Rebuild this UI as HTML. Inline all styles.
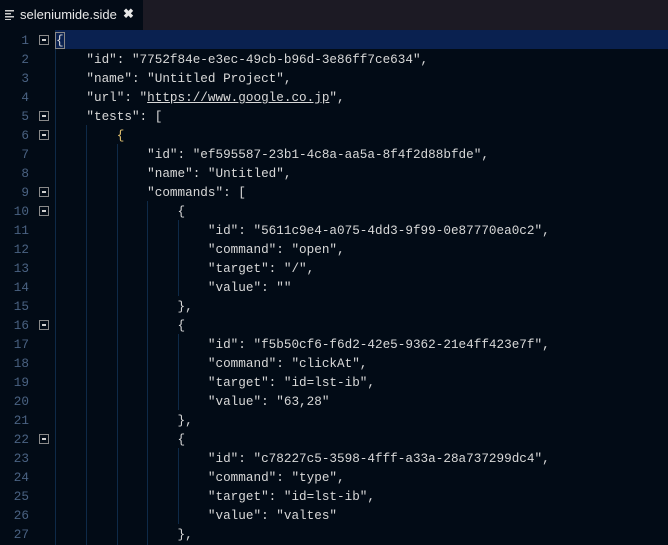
<!DOCTYPE html>
<html><head><meta charset="utf-8"><style>
html,body{margin:0;padding:0;width:668px;height:545px;overflow:hidden;background:#020b16;position:relative;}
.tabbar{position:absolute;left:0;top:0;width:668px;height:30px;background:#1c1a24;}
.tab{position:absolute;left:0;top:0;width:143px;height:30px;background:#030b16;color:#e8e8e8;font:13px "Liberation Sans",sans-serif;}
.tab .t{position:absolute;left:20px;top:7px;}
.tab .x{position:absolute;left:123px;top:6px;font-weight:bold;font-size:13px;}
.hl{position:absolute;left:56px;top:30px;width:612px;height:19px;background:#0a2150;}
.gut{position:absolute;left:55px;top:30px;width:1px;height:515px;background:#0e2a48;}
.g{position:absolute;width:1px;background:#0e2a48;}
.code{position:absolute;left:0;top:31px;font:12.67px/19px "Liberation Mono",monospace;color:#d8d8d8;white-space:pre;}
.ln{position:absolute;left:0;width:29px;text-align:right;color:#4a6282;}
.tx{position:absolute;left:56px;}
.fb{position:absolute;left:39px;width:8px;height:8px;border:1px solid #8a8a8a;}
.fb::after{content:"";position:absolute;left:2px;top:3px;width:4px;height:2px;background:#d0d0d0;}
u{text-decoration:underline;}
.b{color:#e0c070}
</style></head><body>
<div class="tabbar"></div>
<div class="tab"><svg style="position:absolute;left:5px;top:10px" width="10" height="10"><rect x="0" y="0" width="9" height="1.5" fill="#ccc"/><rect x="0" y="3" width="6" height="1.5" fill="#ccc"/><rect x="0" y="6" width="9" height="1.5" fill="#ccc"/><rect x="0" y="9" width="6" height="1" fill="#ccc"/></svg><span class="t">seleniumide.side</span><span class="x">✖</span></div>
<div class="hl"></div>
<div class="gut"></div>
<div class="g" style="left:86px;top:125px;height:420px"></div>
<div class="g" style="left:117px;top:144px;height:401px"></div>
<div class="g" style="left:147px;top:201px;height:344px"></div>
<div class="g" style="left:178px;top:220px;height:76px"></div>
<div class="g" style="left:178px;top:334px;height:76px"></div>
<div class="g" style="left:178px;top:448px;height:76px"></div>
<div class="fb" style="top:35px"></div>
<div class="fb" style="top:111px"></div>
<div class="fb" style="top:130px"></div>
<div class="fb" style="top:187px"></div>
<div class="fb" style="top:206px"></div>
<div class="fb" style="top:320px"></div>
<div class="fb" style="top:434px"></div>
<div class="code">
<div class="ln" style="top:0">1</div><div class="tx" style="top:0"><span style="outline:1px solid #888">{</span></div>
<div class="ln" style="top:19px">2</div><div class="tx" style="top:19px">    "id": "7752f84e-e3ec-49cb-b96d-3e86ff7ce634",</div>
<div class="ln" style="top:38px">3</div><div class="tx" style="top:38px">    "name": "Untitled Project",</div>
<div class="ln" style="top:57px">4</div><div class="tx" style="top:57px">    "url": "<u>https://www.google.co.jp</u>",</div>
<div class="ln" style="top:76px">5</div><div class="tx" style="top:76px">    "tests": [</div>
<div class="ln" style="top:95px">6</div><div class="tx" style="top:95px">        <span class="b">{</span></div>
<div class="ln" style="top:114px">7</div><div class="tx" style="top:114px">            "id": "ef595587-23b1-4c8a-aa5a-8f4f2d88bfde",</div>
<div class="ln" style="top:133px">8</div><div class="tx" style="top:133px">            "name": "Untitled",</div>
<div class="ln" style="top:152px">9</div><div class="tx" style="top:152px">            "commands": [</div>
<div class="ln" style="top:171px">10</div><div class="tx" style="top:171px">                {</div>
<div class="ln" style="top:190px">11</div><div class="tx" style="top:190px">                    "id": "5611c9e4-a075-4dd3-9f99-0e87770ea0c2",</div>
<div class="ln" style="top:209px">12</div><div class="tx" style="top:209px">                    "command": "open",</div>
<div class="ln" style="top:228px">13</div><div class="tx" style="top:228px">                    "target": "/",</div>
<div class="ln" style="top:247px">14</div><div class="tx" style="top:247px">                    "value": ""</div>
<div class="ln" style="top:266px">15</div><div class="tx" style="top:266px">                },</div>
<div class="ln" style="top:285px">16</div><div class="tx" style="top:285px">                {</div>
<div class="ln" style="top:304px">17</div><div class="tx" style="top:304px">                    "id": "f5b50cf6-f6d2-42e5-9362-21e4ff423e7f",</div>
<div class="ln" style="top:323px">18</div><div class="tx" style="top:323px">                    "command": "clickAt",</div>
<div class="ln" style="top:342px">19</div><div class="tx" style="top:342px">                    "target": "id=lst-ib",</div>
<div class="ln" style="top:361px">20</div><div class="tx" style="top:361px">                    "value": "63,28"</div>
<div class="ln" style="top:380px">21</div><div class="tx" style="top:380px">                },</div>
<div class="ln" style="top:399px">22</div><div class="tx" style="top:399px">                {</div>
<div class="ln" style="top:418px">23</div><div class="tx" style="top:418px">                    "id": "c78227c5-3598-4fff-a33a-28a737299dc4",</div>
<div class="ln" style="top:437px">24</div><div class="tx" style="top:437px">                    "command": "type",</div>
<div class="ln" style="top:456px">25</div><div class="tx" style="top:456px">                    "target": "id=lst-ib",</div>
<div class="ln" style="top:475px">26</div><div class="tx" style="top:475px">                    "value": "valtes"</div>
<div class="ln" style="top:494px">27</div><div class="tx" style="top:494px">                },</div>
</div>
</body></html>
